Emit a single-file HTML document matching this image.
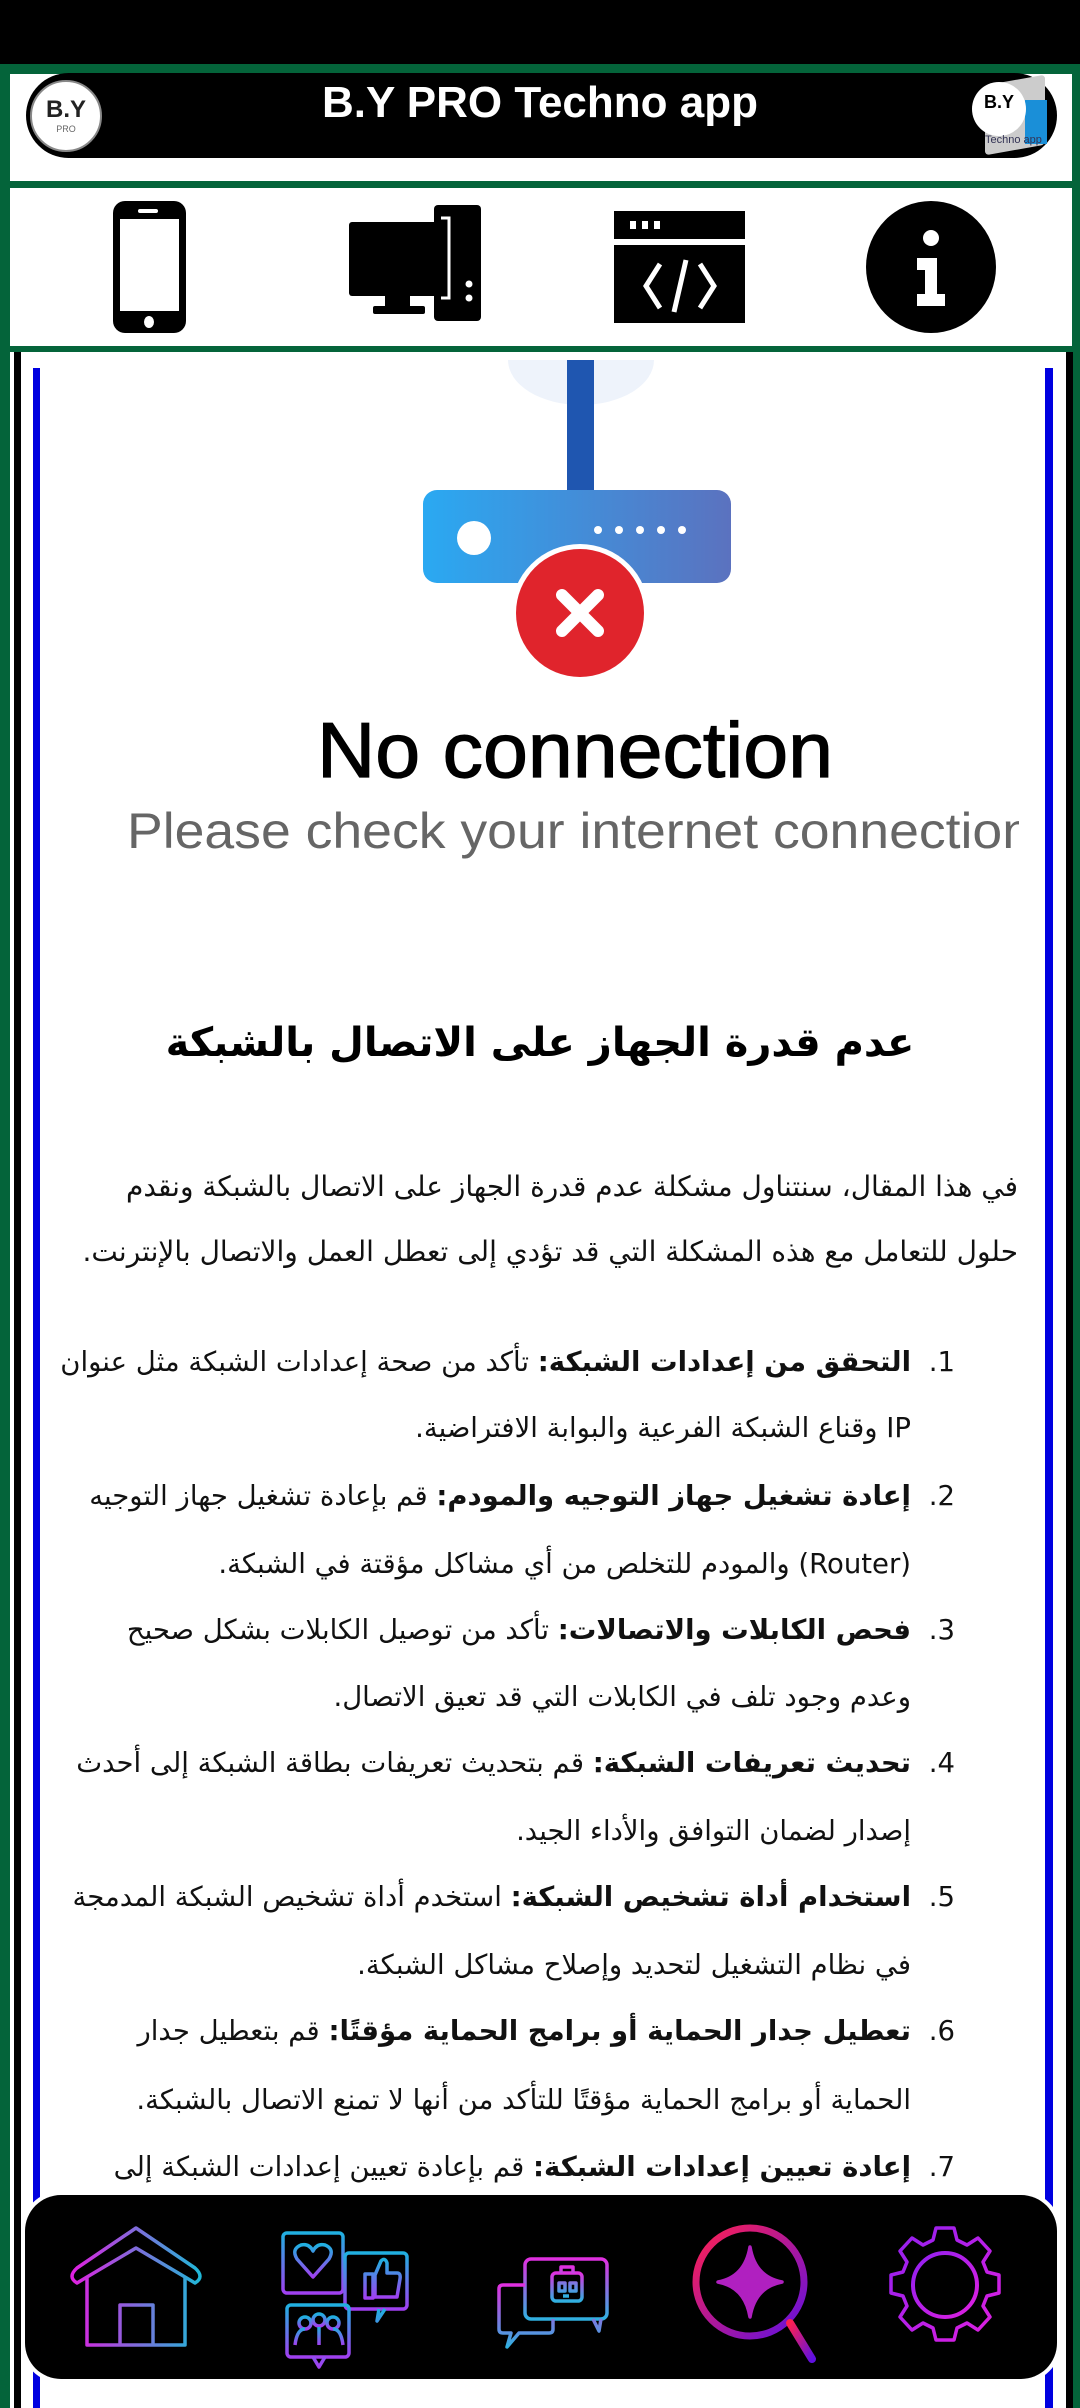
<!DOCTYPE html>
<html><head><meta charset="utf-8">
<style>
*{margin:0;padding:0;box-sizing:border-box}
body{width:1080px;height:2408px;background:#04643a;position:relative;overflow:hidden;font-family:"DejaVu Sans","Liberation Sans",sans-serif}
.abs{position:absolute}
.ar{position:absolute;direction:rtl;white-space:nowrap;font-size:27.5px;color:#111;line-height:40px}
.p{font-size:28px}
b{font-weight:bold}
</style></head><body>
<div class="abs" style="left:0;top:0;width:1080px;height:64px;background:#000"></div>
<!-- header -->
<div class="abs" style="left:10px;top:74px;width:1062px;height:107px;background:#fff"></div>
<div class="abs" style="left:26px;top:73px;width:1031px;height:85px;background:#000;border-radius:43px"></div>
<div class="abs" style="left:0;top:78px;width:1080px;text-align:center;color:#fff;font-family:'Liberation Sans',sans-serif;font-weight:bold;font-size:44px">B.Y PRO Techno app</div>
<div class="abs" style="left:30px;top:80px;width:72px;height:72px;border-radius:50%;background:#fff;border:2px solid #888;text-align:center;font-family:'Liberation Sans',sans-serif">
<div style="font-weight:bold;font-size:24px;margin-top:14px;color:#222">B.Y</div><div style="font-size:9px;color:#666">PRO</div></div>
<div class="abs" style="left:985px;top:80px;width:60px;height:70px;background:#ccc;transform:skewY(-10deg);border-radius:4px"></div>
<div class="abs" style="left:1025px;top:100px;width:22px;height:44px;background:#1a8fd8"></div>
<div class="abs" style="left:972px;top:82px;width:54px;height:54px;border-radius:50%;background:#fff;text-align:center;font-family:'Liberation Sans',sans-serif;font-weight:bold;font-size:18px;padding-top:10px">B.Y</div>
<div class="abs" style="left:985px;top:134px;font-size:11px;color:#335;font-family:'Liberation Sans',sans-serif">Techno app</div>
<!-- icon bar -->
<div class="abs" style="left:10px;top:188px;width:1062px;height:158px;background:#fff"></div>
<svg class="abs" style="left:0;top:188px" width="1080" height="158">
<rect x="113" y="13" width="73" height="132" rx="12" fill="#000"/>
<rect x="120" y="31" width="59" height="92" fill="#fff"/>
<rect x="138" y="21" width="20" height="4" rx="2" fill="#fff"/>
<ellipse cx="149" cy="134" rx="5" ry="6" fill="#fff"/>
<rect x="434" y="17" width="47" height="116" rx="4" fill="#000"/>
<rect x="349" y="34" width="103" height="74" rx="3" fill="#000"/>
<path d="M441 30 h8 v80 h-8" fill="none" stroke="#fff" stroke-width="3"/>
<circle cx="469" cy="96" r="3.5" fill="#fff"/><circle cx="469" cy="110" r="3.5" fill="#fff"/>
<rect x="385" y="108" width="25" height="14" fill="#000"/><rect x="373" y="118" width="52" height="8" rx="2" fill="#000"/>
<rect x="614" y="23" width="131" height="28" fill="#000"/>
<rect x="630" y="33" width="6" height="8" fill="#fff"/><rect x="642" y="33" width="6" height="8" fill="#fff"/><rect x="654" y="33" width="6" height="8" fill="#fff"/>
<rect x="614" y="57" width="131" height="78" fill="#000"/>
<path d="M660 76 l-14 22 l14 22 M700 76 l14 22 l-14 22 M686 72 l-12 52" stroke="#fff" stroke-width="5" fill="none"/>
<ellipse cx="931" cy="79" rx="65" ry="66" fill="#000"/>
<circle cx="931" cy="50" r="8" fill="#fff"/>
<path d="M917 70 h20 v36 h8 v12 h-28 v-12 h8 v-24 h-8z" fill="#fff"/>
</svg>
<!-- content -->
<div class="abs" style="left:10px;top:352px;width:1063px;height:2056px;background:#fff"></div>
<div class="abs" style="left:14px;top:352px;width:7px;height:2056px;background:#000"></div>
<div class="abs" style="left:33px;top:368px;width:7px;height:2040px;background:#0000e0"></div>
<div class="abs" style="left:1045px;top:368px;width:8px;height:2040px;background:#0000e0"></div>
<div class="abs" style="left:1066px;top:352px;width:7px;height:2056px;background:#000"></div>
<svg class="abs" style="left:0;top:360px" width="1080" height="560">
<defs><linearGradient id="rg" x1="0" x2="1"><stop offset="0" stop-color="#2aa9f2"/><stop offset="1" stop-color="#5b72bf"/></linearGradient></defs>
<ellipse cx="581" cy="0" rx="73" ry="45" fill="#eef3fb"/>
<rect x="567" y="0" width="27" height="135" fill="#1f56b0"/>
<rect x="423" y="130" width="308" height="93" rx="14" fill="url(#rg)"/>
<circle cx="474" cy="178" r="17" fill="#fff"/>
<g fill="#fff"><circle cx="598" cy="170" r="4"/><circle cx="619" cy="170" r="4"/><circle cx="640" cy="170" r="4"/><circle cx="661" cy="170" r="4"/><circle cx="682" cy="170" r="4"/></g>
<circle cx="580" cy="253" r="69" fill="#fff"/>
<circle cx="580" cy="253" r="64" fill="#e0242c"/>
<path d="M562 235 l36 36 M598 235 l-36 36" stroke="#fff" stroke-width="12" stroke-linecap="round"/>
<text x="317" y="417" font-family="Liberation Sans" font-size="78" fill="#000" stroke="#000" stroke-width="1.2" textLength="516" lengthAdjust="spacingAndGlyphs">No connection</text>
<text x="127" y="488" font-family="Liberation Sans" font-size="50" fill="#666" textLength="905" lengthAdjust="spacingAndGlyphs">Please check your internet connection</text>
<rect x="1019" y="430" width="26" height="80" fill="#fff"/>
</svg>
<div class="abs" style="left:0;top:1020px;width:1080px;text-align:center;direction:rtl;font-weight:bold;font-size:40px;color:#000">عدم قدرة الجهاز على الاتصال بالشبكة</div>
<div class="ar p" style="right:62px;top:1167px">في هذا المقال، سنتناول مشكلة عدم قدرة الجهاز على الاتصال بالشبكة ونقدم</div>
<div class="ar p" style="right:62px;top:1232px">حلول للتعامل مع هذه المشكلة التي قد تؤدي إلى تعطل العمل والاتصال بالإنترنت.</div>

<div class="ar" style="right:125px;top:1342px">1.</div>
<div class="ar" style="right:169px;top:1342px"><b>التحقق من إعدادات الشبكة:</b> تأكد من صحة إعدادات الشبكة مثل عنوان</div>
<div class="ar" style="right:169px;top:1408px">IP وقناع الشبكة الفرعية والبوابة الافتراضية.</div>
<div class="ar" style="right:125px;top:1476px">2.</div>
<div class="ar" style="right:169px;top:1476px"><b>إعادة تشغيل جهاز التوجيه والمودم:</b> قم بإعادة تشغيل جهاز التوجيه</div>
<div class="ar" style="right:169px;top:1544px">(Router) والمودم للتخلص من أي مشاكل مؤقتة في الشبكة.</div>
<div class="ar" style="right:125px;top:1610px">3.</div>
<div class="ar" style="right:169px;top:1610px"><b>فحص الكابلات والاتصالات:</b> تأكد من توصيل الكابلات بشكل صحيح</div>
<div class="ar" style="right:169px;top:1677px">وعدم وجود تلف في الكابلات التي قد تعيق الاتصال.</div>
<div class="ar" style="right:125px;top:1743px">4.</div>
<div class="ar" style="right:169px;top:1743px"><b>تحديث تعريفات الشبكة:</b> قم بتحديث تعريفات بطاقة الشبكة إلى أحدث</div>
<div class="ar" style="right:169px;top:1811px">إصدار لضمان التوافق والأداء الجيد.</div>
<div class="ar" style="right:125px;top:1877px">5.</div>
<div class="ar" style="right:169px;top:1877px"><b>استخدام أداة تشخيص الشبكة:</b> استخدم أداة تشخيص الشبكة المدمجة</div>
<div class="ar" style="right:169px;top:1945px">في نظام التشغيل لتحديد وإصلاح مشاكل الشبكة.</div>
<div class="ar" style="right:125px;top:2011px">6.</div>
<div class="ar" style="right:169px;top:2011px"><b>تعطيل جدار الحماية أو برامج الحماية مؤقتًا:</b> قم بتعطيل جدار</div>
<div class="ar" style="right:169px;top:2080px">الحماية أو برامج الحماية مؤقتًا للتأكد من أنها لا تمنع الاتصال بالشبكة.</div>
<div class="ar" style="right:125px;top:2147px">7.</div>
<div class="ar" style="right:169px;top:2147px"><b>إعادة تعيين إعدادات الشبكة:</b> قم بإعادة تعيين إعدادات الشبكة إلى</div>
<div class="ar" style="right:169px;top:2345px">الإعدادات الافتراضية لإصلاح أي مشاكل في التكوين.</div>
<!-- bottom nav -->
<div class="abs" style="left:21px;top:2191px;width:1040px;height:192px;background:#fff;border-radius:40px"></div>
<svg class="abs" style="left:25px;top:2195px" width="1032" height="184">
<defs>
<linearGradient id="g1" x1="0" x2="1"><stop offset="0" stop-color="#e020e0"/><stop offset="1" stop-color="#20b8d8"/></linearGradient>
<linearGradient id="g2" x1="0" y1="0" x2="0" y2="1"><stop offset="0" stop-color="#20b0e0"/><stop offset="1" stop-color="#a040f0"/></linearGradient>
<linearGradient id="g3" x1="0" y1="0" x2="0" y2="1"><stop offset="0" stop-color="#e030e0"/><stop offset="1" stop-color="#30b0e0"/></linearGradient>
<linearGradient id="g4" x1="0" y1="0" x2="1" y2="1"><stop offset="0" stop-color="#ff2050"/><stop offset="1" stop-color="#6010e0"/></linearGradient>
<linearGradient id="g5" x1="0" y1="0" x2="1" y2="1"><stop offset="0" stop-color="#9020f0"/><stop offset="1" stop-color="#e020e0"/></linearGradient>
</defs>
<rect x="0" y="0" width="1032" height="184" rx="36" fill="#000"/>
<g fill="none" stroke-width="3.5" stroke-linejoin="round">
<path d="M111 33 L170 73 Q180 82 170 88 L160 82 L111 53 L62 82 L52 88 Q42 82 52 73 Z M62 82 V150 H160 V82 M95 150 V110 H128 V150" stroke="url(#g1)"/>
<g stroke="url(#g2)">
<rect x="258" y="38" width="60" height="60" rx="4"/>
<path d="M288 82 l-16 -18 q-6 -10 4 -14 q8 -2 12 6 q4 -8 12 -6 q10 4 4 14 z"/>
<rect x="320" y="58" width="62" height="56" rx="4"/>
<path d="M340 103 v-24 h8 v24z M350 80 l6 -14 q4 -4 6 2 v10 h10 q4 0 3 6 l-3 18 h-22z"/>
<rect x="262" y="110" width="62" height="52" rx="4"/>
<circle cx="280" cy="128" r="6"/><circle cx="294" cy="125" r="6"/><circle cx="308" cy="128" r="6"/>
<path d="M270 150 q2 -16 10 -16 M294 150 q0 -18 0 -18 M318 150 q-2 -16 -10 -16"/>
<path d="M288 162 l6 10 l6 -10 M360 114 l-8 12 l2 -12"/>
</g>
<g stroke="url(#g3)">
<rect x="500" y="64" width="82" height="60" rx="6"/>
<rect x="527" y="78" width="30" height="28" rx="4"/>
<path d="M536 78 v-6 h12 v6 M534 88 h6 v8 h-6z M545 88 h6 v8 h-6z M538 101 h6"/>
<path d="M500 90 H478 q-4 0 -4 4 v40 q0 4 4 4 h8 l-4 14 l12 -14 h30 q4 0 4 -4 v-10 M568 124 l6 12 l2 -12"/>
</g>
<circle cx="725" cy="87" r="54" stroke="url(#g4)" stroke-width="7"/>
<path d="M765 128 l22 36" stroke="url(#g4)" stroke-width="8" stroke-linecap="round"/>
<path d="M725 52 Q730 82 757 87 Q730 92 725 122 Q720 92 693 87 Q720 82 725 52Z" fill="#b020c0" stroke="#b020c0"/>
<circle cx="920" cy="90" r="32" stroke="url(#g5)" stroke-width="4"/>
<path d="M911 33 h18 l3 12 l10 5 l11 -7 l12 13 l-7 11 l4 10 l12 3 v18 l-12 3 l-4 10 l7 11 l-12 13 l-11 -7 l-10 5 l-3 12 h-18 l-3 -12 l-10 -5 l-11 7 l-12 -13 l7 -11 l-4 -10 l-12 -3 v-18 l12 -3 l4 -10 l-7 -11 l12 -13 l11 7 l10 -5z" stroke="url(#g5)"/>
</g>
</svg>
</body></html>
